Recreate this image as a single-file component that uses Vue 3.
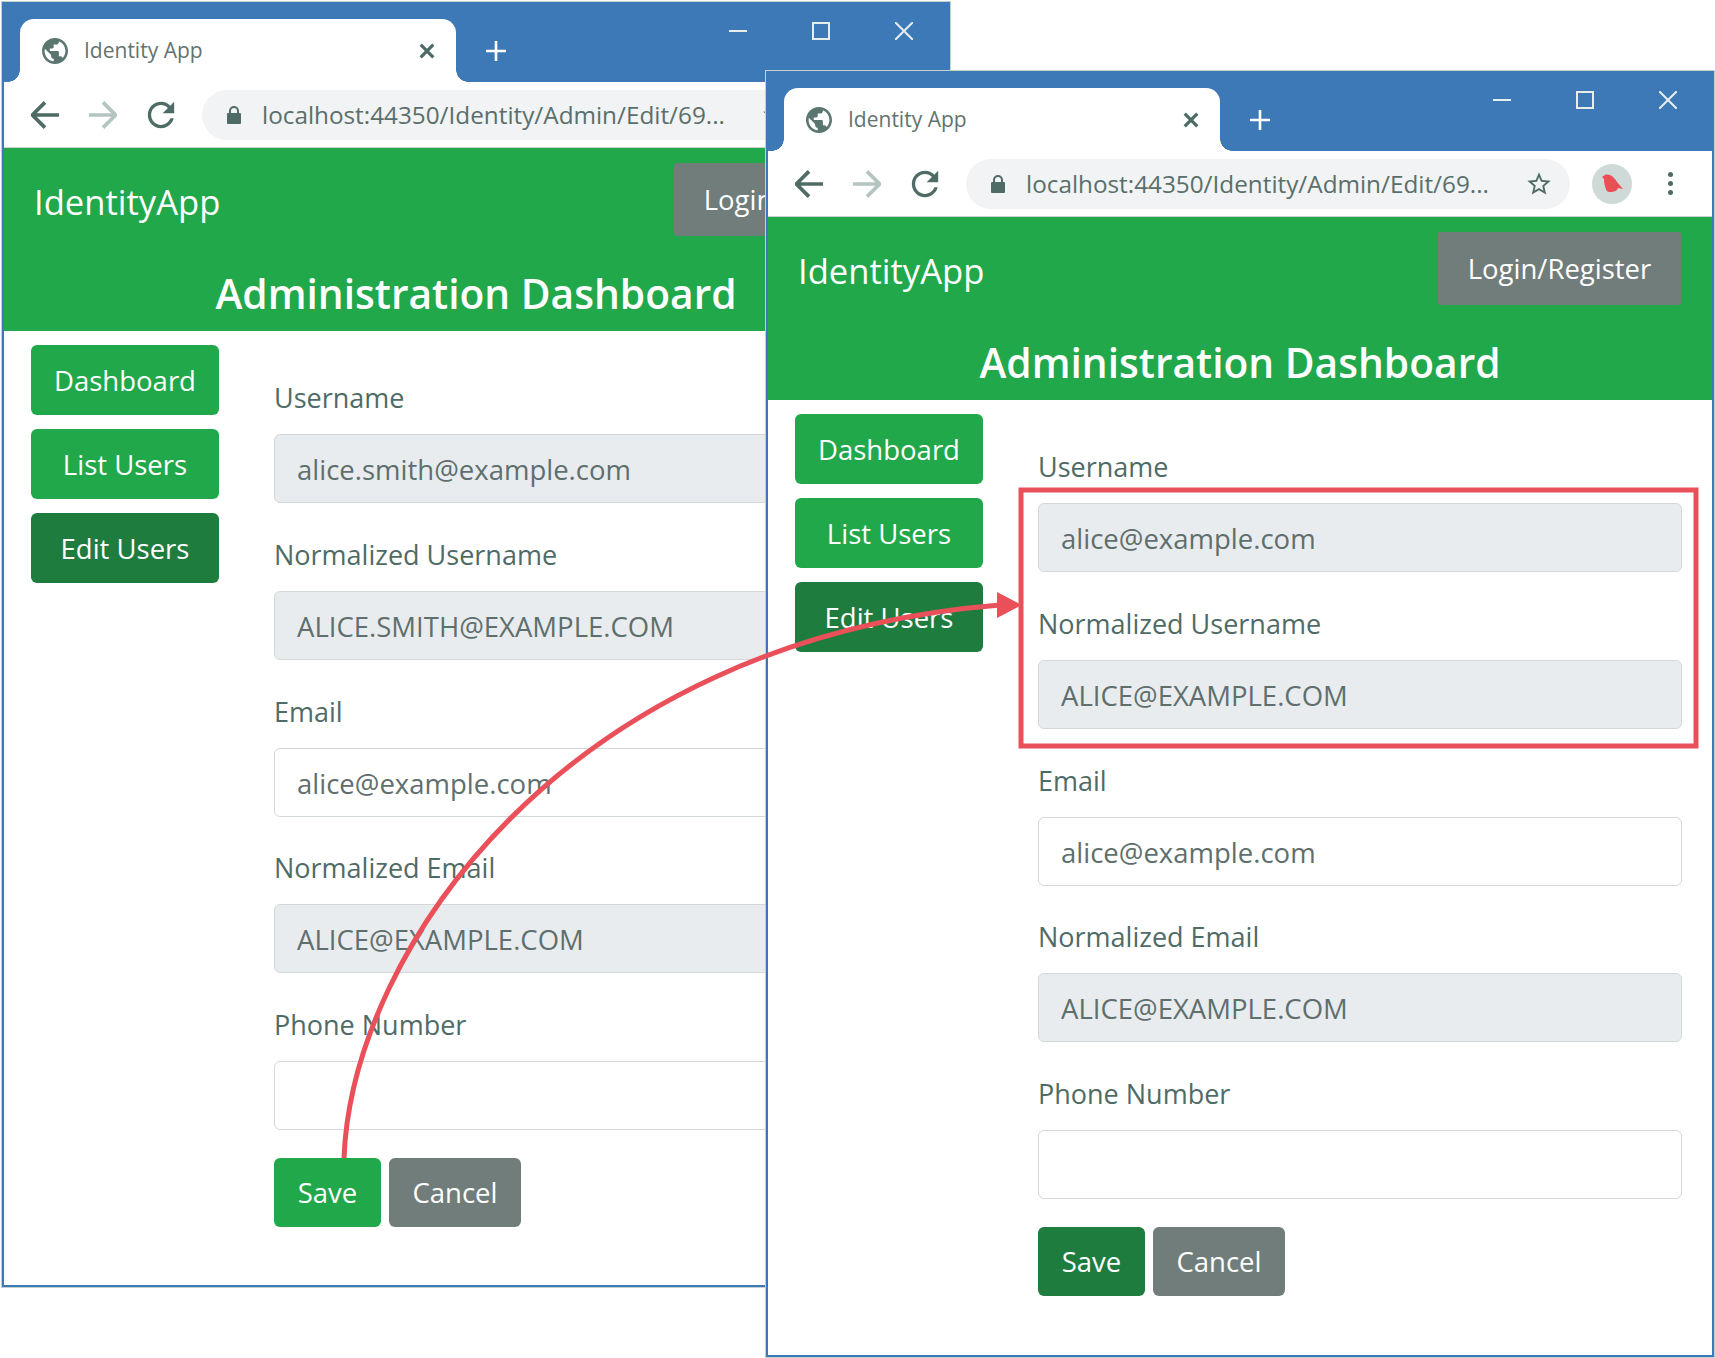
<script setup>
const windows = [
  {
    id: 'back',
    username: 'alice.smith@example.com',
    normUsername: 'ALICE.SMITH@EXAMPLE.COM',
    saveClass: 'btn-green',
    showExtras: false,
  },
  {
    id: 'front',
    username: 'alice@example.com',
    normUsername: 'ALICE@EXAMPLE.COM',
    saveClass: 'btn-dark',
    showExtras: true,
  },
]

const fieldsFor = (w) => [
  { label: 'Username', value: w.username, readonly: true },
  { label: 'Normalized Username', value: w.normUsername, readonly: true },
  { label: 'Email', value: 'alice@example.com', readonly: false },
  { label: 'Normalized Email', value: 'ALICE@EXAMPLE.COM', readonly: true },
  { label: 'Phone Number', value: '', readonly: false },
]

const sideLinks = [
  { text: 'Dashboard', cls: 'btn-green' },
  { text: 'List Users', cls: 'btn-green' },
  { text: 'Edit Users', cls: 'btn-dark' },
]
</script>

<template>
  <div class="page">
    <section v-for="w in windows" :key="w.id" class="window" :class="w.id">
      <div class="titlebar">
        <div class="tab">
          <svg class="favicon" viewBox="2 2 20 20">
            <path fill="#5b7571" d="M12 2C6.48 2 2 6.48 2 12s4.48 10 10 10 10-4.48 10-10S17.52 2 12 2zm-1 17.93c-3.95-.49-7-3.85-7-7.93 0-.62.08-1.21.21-1.79L9 15v1c0 1.1.9 2 2 2v1.93zm6.9-2.54c-.26-.81-1-1.39-1.9-1.39h-1v-3c0-.55-.45-1-1-1H8v-2h2c.55 0 1-.45 1-1V7h2c1.1 0 2-.9 2-2v-.41c2.93 1.19 5 4.06 5 7.41 0 2.08-.8 3.97-2.1 5.39z" />
          </svg>
          <span class="tab-title">Identity App</span>
          <svg class="tab-close" viewBox="0 0 14 14">
            <path d="M1.5 1.5l11 11M12.5 1.5l-11 11" stroke="#4d6b66" stroke-width="2.8" fill="none" />
          </svg>
        </div>
        <svg class="new-tab" viewBox="0 0 22 22">
          <path d="M11 1v20M1 11h20" stroke="#fff" stroke-width="2.6" fill="none" />
        </svg>
        <div class="controls">
          <svg viewBox="0 0 18 18" class="ctl ctl-min"><path d="M0 9h18" stroke="#e8eeee" stroke-width="2" /></svg>
          <svg viewBox="0 0 18 18" class="ctl ctl-max"><rect x="1" y="1" width="16" height="16" stroke="#e8eeee" stroke-width="2" fill="none" /></svg>
          <svg viewBox="0 0 18 18" class="ctl ctl-close"><path d="M0 0l18 18M18 0L0 18" stroke="#e8eeee" stroke-width="2" fill="none" /></svg>
        </div>
      </div>

      <div class="toolbar">
        <svg class="nav-icon" viewBox="2 2 20 20"><path d="M22 12H4M12 3l-9 9 9 9" stroke="#4f6b66" stroke-width="2.6" fill="none" /></svg>
        <svg class="nav-icon" viewBox="2 2 20 20"><path d="M2 12h18M12 3l9 9-9 9" stroke="#b4c5c1" stroke-width="2.6" fill="none" /></svg>
        <svg class="nav-icon" viewBox="3.5 3.5 17 17"><path fill="#4f6b66" d="M17.65 6.35C16.2 4.9 14.21 4 12 4c-4.42 0-7.99 3.58-7.99 8s3.57 8 7.99 8c3.73 0 6.84-2.55 7.73-6h-2.08c-.82 2.33-3.04 4-5.65 4-3.31 0-6-2.69-6-6s2.69-6 6-6c1.66 0 3.14.69 4.22 1.78L13 11h7V4l-2.35 2.35z" /></svg>
        <div class="omnibox">
          <svg class="lock" viewBox="0 0 14 18"><path fill="#4f6b66" d="M2 7V5a5 5 0 0 1 10 0v2h1a1 1 0 0 1 1 1v9a1 1 0 0 1-1 1H1a1 1 0 0 1-1-1V8a1 1 0 0 1 1-1zm2 0h6V5a3 3 0 0 0-6 0z" /></svg>
          <span class="url">localhost:44350/Identity/Admin/Edit/69...</span>
          <svg class="star" viewBox="0 0 24 24"><path fill="#4f6b66" d="M22 9.24l-7.19-.62L12 2 9.19 8.63 2 9.24l5.46 4.73L5.82 21 12 17.27 18.18 21l-1.63-7.03L22 9.24zM12 15.4l-3.76 2.27 1-4.28-3.32-2.88 4.38-.38L12 6.1l1.71 4.04 4.38.38-3.32 2.88 1 4.28L12 15.4z" /></svg>
        </div>
        <div v-if="w.showExtras" class="avatar">
          <svg viewBox="0 0 40 40"><path fill="#ea4f56" d="M10 13l3-2c3-1 6 0 8 2 3 3 6 8 10 12l-5-1c-1 3-4 4-8 4-3 0-4-2-5-6-1-3-1-6-1-7z" /></svg>
        </div>
        <div v-if="w.showExtras" class="menu-dots"><i></i><i></i><i></i></div>
      </div>

      <header class="navbar">
        <div class="nav-row">
          <span class="brand">IdentityApp</span>
          <a class="btn btn-grey login">Login/Register</a>
        </div>
        <h1 class="dash-title">Administration Dashboard</h1>
      </header>

      <main class="content">
        <nav class="side">
          <a v-for="l in sideLinks" :key="l.text" class="btn side-btn" :class="l.cls">{{ l.text }}</a>
        </nav>
        <form class="form">
          <div v-for="f in fieldsFor(w)" :key="f.label" class="field">
            <label>{{ f.label }}</label>
            <input :value="f.value" :readonly="f.readonly" :class="{ ro: f.readonly }" />
          </div>
          <div class="actions">
            <a class="btn save" :class="w.saveClass">Save</a>
            <a class="btn btn-grey cancel">Cancel</a>
          </div>
        </form>
      </main>
    </section>

    <svg class="annotation" viewBox="0 0 1715 1358" width="1715" height="1358">
      <path d="M344 1158C352 950 566 640 1000 605" stroke="#e9505a" stroke-width="5" fill="none" />
      <path d="M997 592L1022 605L997 618Z" fill="#e9505a" />
      <rect x="1021" y="490" width="675" height="256" stroke="#e9505a" stroke-width="5" fill="none" />
    </svg>
  </div>
</template>

<style scoped>
.page {
  position: relative;
  width: 1715px;
  height: 1358px;
  background: #fff;
  overflow: hidden;
  font-family: "Open Sans", "Noto Sans", sans-serif;
}
.window {
  position: absolute;
  box-sizing: border-box;
  width: 948px;
  background: #fff;
  border: 2px solid #3d79b7;
  outline: 1px solid #c4d0ce;
}
.back { left: 2px; top: 2px; height: 1285px; }
.front { left: 766px; top: 71px; height: 1286px; }

.titlebar {
  position: relative;
  display: flex;
  align-items: flex-end;
  height: 78px;
  padding-left: 16px;
  background: #3d79b7;
}
.tab {
  position: relative;
  display: flex;
  align-items: center;
  box-sizing: border-box;
  width: 436px;
  height: 63px;
  padding: 0 21px 0 22px;
  background: #fff;
  border-radius: 14px 14px 0 0;
}
.tab::before,
.tab::after {
  content: "";
  position: absolute;
  bottom: 0;
  width: 12px;
  height: 12px;
  background: radial-gradient(circle at var(--cx) 0, #3d79b7 11.5px, #fff 12px);
}
.tab::before { left: -12px; --cx: 0; }
.tab::after { right: -12px; --cx: 100%; }
.favicon { width: 26px; height: 26px; flex: none; }
.tab-title {
  margin-left: 16px;
  margin-bottom: 2px;
  font-size: 21px;
  color: #62736f;
}
.tab-close { width: 16px; height: 16px; margin-left: auto; }
.new-tab { width: 22px; height: 22px; margin: 0 0 20px 29px; }
.controls {
  position: absolute;
  top: 18px;
  right: 0;
  display: flex;
  align-items: center;
}
.ctl { width: 18px; height: 18px; }
.ctl-min { margin-right: 65px; }
.ctl-max { margin-right: 65px; }
.ctl-close { margin-right: 35px; }

.toolbar {
  display: flex;
  align-items: center;
  box-sizing: border-box;
  height: 66px;
  padding: 0 0 0 27px;
  background: #fff;
  border-bottom: 1px solid #c9d2d0;
}
.nav-icon { width: 28px; height: 28px; flex: none; margin-right: 30px; }
.omnibox {
  display: flex;
  align-items: center;
  box-sizing: border-box;
  width: 604px;
  height: 50px;
  margin-left: -3px;
  padding: 0 17px 0 25px;
  background: #f1f3f4;
  border-radius: 25px;
}
.lock { width: 14px; height: 18px; flex: none; }
.url {
  margin-left: 21px;
  font-size: 24.3px;
  color: #5a6f6b;
  white-space: nowrap;
}
.star { width: 28px; height: 28px; margin-left: auto; flex: none; }
.avatar {
  width: 40px;
  height: 40px;
  margin-left: 22px;
  border-radius: 50%;
  background: #cfd9d7;
}
.avatar svg { display: block; width: 40px; height: 40px; }
.menu-dots {
  display: flex;
  flex-direction: column;
  gap: 4px;
  margin-left: 36px;
}
.menu-dots i {
  display: block;
  width: 5px;
  height: 5px;
  border-radius: 50%;
  background: #4f6b66;
}

.navbar {
  height: 183px;
  background: #21a84b;
  color: #fff;
}
.nav-row {
  display: flex;
  align-items: center;
  justify-content: space-between;
  padding: 15px 31px 0 30px;
}
.brand { padding-top: 4px; font-size: 34.6px; }
.dash-title {
  margin: 20px 0 0;
  font-size: 40.7px;
  line-height: 74px;
  font-weight: 600;
  text-align: center;
}

.btn {
  display: flex;
  align-items: center;
  justify-content: center;
  box-sizing: border-box;
  height: 69px;
  border-radius: 6px;
  color: #fff;
  font-size: 27.5px;
}
.btn-green { background: #21a84b; }
.btn-dark { background: #1e7c3f; }
.btn-grey { background: #717d7b; }
.login { width: 243px; height: 73px; border-radius: 3px; }

.content {
  display: flex;
  gap: 55px;
  padding: 14px 0 0 27px;
}
.side {
  display: flex;
  flex-direction: column;
  gap: 14px;
  width: 188px;
  flex: none;
}
.side-btn { height: 70px; }
.form {
  width: 644px;
  padding-top: 35px;
}
.field { margin-bottom: 33.75px; }
.field:nth-last-child(2) { margin-bottom: 28px; }
.field label {
  display: block;
  height: 36px;
  margin-bottom: 18px;
  font-size: 27px;
  line-height: 35px;
  color: #4f6b66;
}
.field input {
  display: block;
  box-sizing: border-box;
  width: 100%;
  height: 69px;
  padding: 2px 22px 0;
  border: 1px solid #d3d9d8;
  border-radius: 6px;
  background: #fff;
  color: #5f6f6d;
  font: inherit;
  font-size: 27.5px;
  outline: none;
}
.field input.ro { background: #e9ecef; }
.actions { display: flex; gap: 8px; }
.save { width: 107px; }
.cancel { width: 132px; }

.annotation {
  position: absolute;
  left: 0;
  top: 0;
  pointer-events: none;
}
</style>
